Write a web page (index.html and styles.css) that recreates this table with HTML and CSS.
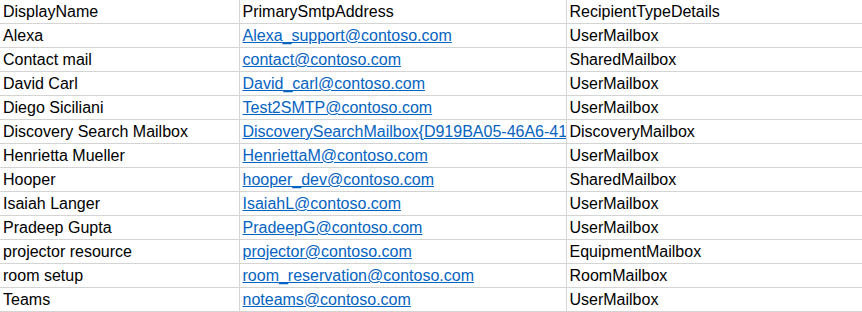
FILE: index.html
```html
<!DOCTYPE html>
<html lang="en">
<head>
<meta charset="utf-8">
<link rel="stylesheet" href="styles.css">
<title>Mailboxes</title>
</head>
<body>
<table class="sheet">
  <colgroup>
    <col class="c-name">
    <col class="c-mail">
    <col class="c-type">
  </colgroup>
  <tr><td>DisplayName</td><td>PrimarySmtpAddress</td><td>RecipientTypeDetails</td></tr>
  <tr><td>Alexa</td><td><a href="#">Alexa_support@contoso.com</a></td><td>UserMailbox</td></tr>
  <tr><td>Contact mail</td><td><a href="#">contact@contoso.com</a></td><td>SharedMailbox</td></tr>
  <tr><td>David Carl</td><td><a href="#">David_carl@contoso.com</a></td><td>UserMailbox</td></tr>
  <tr><td>Diego Siciliani</td><td><a href="#">Test2SMTP@contoso.com</a></td><td>UserMailbox</td></tr>
  <tr><td>Discovery Search Mailbox</td><td><a href="#">DiscoverySearchMailbox{D919BA05-46A6-41</a></td><td>DiscoveryMailbox</td></tr>
  <tr><td>Henrietta Mueller</td><td><a href="#">HenriettaM@contoso.com</a></td><td>UserMailbox</td></tr>
  <tr><td>Hooper</td><td><a href="#">hooper_dev@contoso.com</a></td><td>SharedMailbox</td></tr>
  <tr><td>Isaiah Langer</td><td><a href="#">IsaiahL@contoso.com</a></td><td>UserMailbox</td></tr>
  <tr><td>Pradeep Gupta</td><td><a href="#">PradeepG@contoso.com</a></td><td>UserMailbox</td></tr>
  <tr><td>projector resource</td><td><a href="#">projector@contoso.com</a></td><td>EquipmentMailbox</td></tr>
  <tr><td>room setup</td><td><a href="#">room_reservation@contoso.com</a></td><td>RoomMailbox</td></tr>
  <tr><td>Teams</td><td><a href="#">noteams@contoso.com</a></td><td>UserMailbox</td></tr>
</table>
</body>
</html>
```

FILE: styles.css
```css
html, body {
  margin: 0;
  background: white;
  color: #000;
  font-family: 'Liberation Sans', 'Arial', sans-serif;
  font-size: 16px;
}

.sheet {
  border-collapse: collapse;
  table-layout: fixed;
  width: 862px;
}

.c-name { width: 239px; }
.c-mail { width: 327px; }

.sheet td {
  height: 23px;
  padding: 0 0 0 3px;
  border-bottom: 1px solid #d4d4d4;
  border-right: 1px solid #d4d4d4;
  white-space: nowrap;
  overflow: hidden;
  line-height: 23px;
  box-sizing: border-box;
}

.sheet td:last-child {
  border-right: none;
}

.sheet a {
  color: #0563c1;
  text-decoration: underline;
}
```
